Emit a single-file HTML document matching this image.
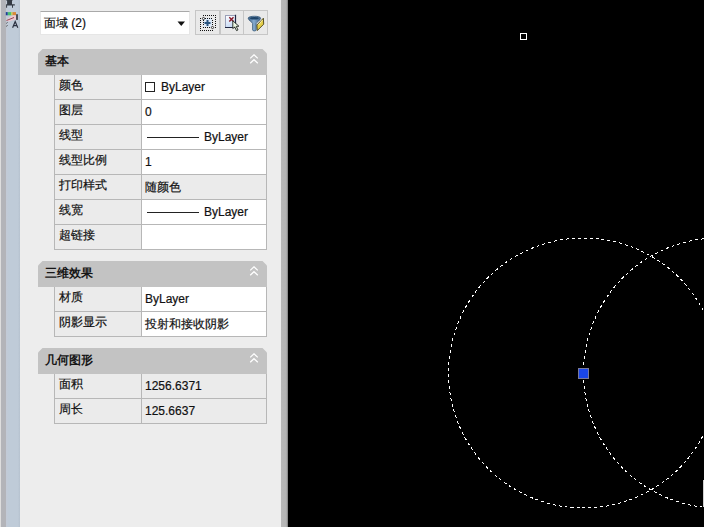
<!DOCTYPE html>
<html><head><meta charset="utf-8"><style>
*{margin:0;padding:0;box-sizing:border-box}
html,body{width:704px;height:527px;overflow:hidden;background:#000;font-family:"Liberation Sans",sans-serif;font-size:12px;color:#111;-webkit-text-stroke:0.2px #111}
.a{position:absolute}
.hd{position:absolute;left:38px;width:229px;height:26px;background:#c3c3c3;clip-path:polygon(4.5px 0,calc(100% - 4.5px) 0,100% 4.5px,100% 100%,0 100%,0 4.5px);font-weight:bold;line-height:25px;padding-left:7px;color:#161616;-webkit-text-stroke:0}
.hd .chev{position:absolute;left:211px;top:5px}
.grid{position:absolute;left:54px;width:213px;border:1px solid #b7b7b7;border-top:none;background:#ebebeb}
.row{position:relative;height:25px;border-bottom:1px solid #b7b7b7}
.row:last-child{border-bottom:none;height:24px}
.lb{position:absolute;left:0;top:0;width:86px;height:24px;padding-left:4px;line-height:21px}
.vl{position:absolute;left:86px;top:0;width:125px;height:24px;border-left:1px solid #b7b7b7;background:#fff;padding-left:3px;line-height:25px}
.vl.ro{background:#ebebeb}
</style></head><body>
<!-- left strips -->
<div class="a" style="left:0;top:0;width:1px;height:527px;background:#dedede"></div>
<div class="a" style="left:1px;top:0;width:5px;height:527px;background:#b3b4b9"></div>
<div class="a" style="left:6px;top:0;width:14px;height:527px;background:linear-gradient(to right,#c3cad6 0,#bfcbd8 20%,#bfcbd8 85%,#b6c2cf 100%)"></div>
<svg class="a" style="left:5px;top:0;z-index:2" width="15" height="32" viewBox="0 0 15 32">
 <path d="M1.1 0h6.6v0.6h-0.7v3.7h2.8v1.3h-1.8v2.1h-1v-2.1h-4.9v2.1h-1v-3.4h1v-3.7h-1z" fill="#353b44"/>
 <rect x="0.8" y="12.1" width="2" height="3.2" fill="#1f3f9a"/><rect x="2.8" y="12.1" width="3.4" height="3.2" fill="#48c070"/><rect x="6.2" y="12.1" width="1.4" height="3.2" fill="#c8d048"/><rect x="7.6" y="12.1" width="3.4" height="3.2" fill="#d8883a"/>
 <path d="M1.2 20.5C3 18 6 16 8.5 15.3L11 15.5L11 19.5L7 20.5L4 21.4z" fill="#ecc8cf"/>
 <path d="M1.5 20.5L9 17.5" stroke="#8a3a4a" stroke-width="0.9"/>
 <rect x="11" y="14.2" width="2" height="5.7" fill="#4a505a"/>
 <path d="M1.5 23.5l0.9-1.2M1.5 26.5l0.9-1.3" stroke="#333" stroke-width="0.9"/>
 <path d="M7.6 27.8l2.6-6.2 2.6 6.2M8.6 25.6h3.2" fill="none" stroke="#2a3040" stroke-width="1.2"/>
</svg>
<!-- panel -->
<div class="a" style="left:20px;top:0;width:261px;height:527px;background:#ededed"></div>
<div class="a" style="left:281px;top:0;width:7px;height:527px;background:linear-gradient(to right,#b9b9b9 0,#b5b5b5 75%,#7a7a7a 100%)"></div>

<!-- dropdown -->
<div class="a" style="left:40px;top:11px;width:150px;height:24px;background:#fff;border-top:1px solid #a9a9a9;border-left:1px solid #e6e6e6;border-right:1px solid #e6e6e6;border-bottom:1px solid #e6e6e6"></div>
<div class="a" style="left:44px;top:16px;line-height:14px">面域 (2)</div>
<svg class="a" style="left:177px;top:21px" width="9" height="6"><path d="M0.5 0.5H8L4.25 5z" fill="#111"/></svg>

<!-- buttons -->
<div class="a" style="left:195px;top:10px;width:25px;height:25px;background:#e9e9e9;border:1px solid #c6c6c6"></div>
<div class="a" style="left:220px;top:10px;width:24px;height:25px;background:#e9e9e9;border:1px solid #c6c6c6"></div>
<div class="a" style="left:243px;top:10px;width:25px;height:25px;background:#e9e9e9;border:1px solid #c6c6c6"></div>
<svg class="a" style="left:195px;top:10px" width="25" height="25" viewBox="0 0 25 25">
 <rect x="8" y="8" width="9" height="9" fill="#dce8f6"/>
 <g fill="#111">
  <path d="M8 5h1v1h-1zM10 5h1v1h-1zM12 5h1v1h-1zM14 5h1v1h-1zM16 5h1v1h-1zM18 5h1v1h-1zM20 5h1v1h-1z"/>
  <path d="M20 7h1v1h-1zM20 9h1v1h-1zM20 11h1v1h-1zM20 13h1v1h-1zM20 15h1v1h-1zM20 17h1v1h-1z"/>
  <path d="M5 8h1v1h-1zM5 10h1v1h-1zM5 12h1v1h-1zM5 14h1v1h-1zM5 16h1v1h-1zM5 18h1v1h-1zM5 20h1v1h-1z"/>
  <path d="M7 20h1v1h-1zM9 20h1v1h-1zM11 20h1v1h-1zM13 20h1v1h-1zM15 20h1v1h-1zM17 20h1v1h-1z"/>
  <path d="M10 8h1v1h-1zM12 8h1v1h-1zM14 8h1v1h-1zM16 8h1v1h-1z"/>
  <path d="M8 17h1v1h-1zM10 17h1v1h-1zM12 17h1v1h-1zM14 17h1v1h-1z"/>
  <path d="M8 10h1v1h-1zM8 12h1v1h-1zM8 14h1v1h-1z"/>
  <path d="M17 10h1v1h-1zM17 12h1v1h-1zM17 14h1v1h-1z"/>
 </g>
 <circle cx="8.5" cy="8.5" r="1.1" fill="#fff" stroke="#111" stroke-width="0.8"/>
 <circle cx="17.5" cy="17.5" r="1.1" fill="#fff" stroke="#111" stroke-width="0.8"/>
 <path d="M12.5 10v6M9.5 13h6" stroke="#2a5580" stroke-width="2"/>
</svg>
<svg class="a" style="left:220px;top:10px" width="24" height="25" viewBox="0 0 24 25">
 <defs><linearGradient id="g2" x1="0" y1="0" x2="0.3" y2="1"><stop offset="0" stop-color="#ffffff"/><stop offset="1" stop-color="#c8daf5"/></linearGradient></defs>
 <rect x="5.5" y="5.5" width="10" height="12" fill="url(#g2)" stroke="#9aa0b8" stroke-width="1"/>
 <path d="M5 17.5h10.5V4.8" fill="none" stroke="#1e2440" stroke-width="1.2"/>
 <path d="M9.3 7.3l4.2 4.2M13.5 7.3l-4.2 4.2" stroke="#8a1826" stroke-width="1.4"/>
 <path d="M12.8 10.8v7.8l1.9-1.6 1.8 3.6 1.5-0.7-1.8-3.5 2.7-0.2z" fill="#eef8e4" stroke="#1c241c" stroke-width="0.9"/>
</svg>
<svg class="a" style="left:243px;top:10px" width="25" height="25" viewBox="0 0 25 25">
 <defs><linearGradient id="g3" x1="0" y1="0" x2="1" y2="0"><stop offset="0" stop-color="#3d6288"/><stop offset="0.45" stop-color="#86acd0"/><stop offset="1" stop-color="#3d6288"/></linearGradient></defs>
 <path d="M5.2 8.2C5.2 5.6 17.6 5.6 17.6 8.2C17.6 10.2 13.6 12 13.2 13.5V19.9C13.2 21.3 9.6 21.3 9.6 19.9V13.5C9.2 12 5.2 10.2 5.2 8.2z" fill="url(#g3)" stroke="#3a5a78" stroke-width="0.8"/>
 <ellipse cx="11.4" cy="8.3" rx="4.4" ry="1.3" fill="#1f4468"/>
 <path d="M20.4 8.2L20.7 14.2L14.3 20.6L13.9 15z" fill="#e2cc48" stroke="#4a4418" stroke-width="0.9"/>
 <path d="M19.5 10L15.5 15" fill="none" stroke="#f8f0b0" stroke-width="0.9"/>
</svg>
<!-- section 1 -->
<div class="hd" style="top:49px">基本<svg class="chev" width="10" height="10" viewBox="0 0 10 10"><path d="M1.2 4.4L5 0.8L8.8 4.4M1.2 9.3L5 5.7L8.8 9.3" fill="none" stroke="#fff" stroke-width="1.25"/></svg></div>
<div class="grid" style="top:75px">
 <div class="row"><div class="lb">颜色</div><div class="vl"><span style="display:inline-block;width:10px;height:10px;border:1px solid #222;vertical-align:-1px;margin-right:6px;margin-left:0"></span>ByLayer</div></div>
 <div class="row"><div class="lb">图层</div><div class="vl">0</div></div>
 <div class="row"><div class="lb">线型</div><div class="vl"><span style="display:inline-block;width:52px;height:1px;background:#222;vertical-align:3px;margin-left:2px;margin-right:5px"></span>ByLayer</div></div>
 <div class="row"><div class="lb">线型比例</div><div class="vl">1</div></div>
 <div class="row"><div class="lb">打印样式</div><div class="vl ro">随颜色</div></div>
 <div class="row"><div class="lb">线宽</div><div class="vl"><span style="display:inline-block;width:52px;height:1px;background:#222;vertical-align:3px;margin-left:2px;margin-right:5px"></span>ByLayer</div></div>
 <div class="row"><div class="lb">超链接</div><div class="vl"></div></div>
</div>

<!-- section 2 -->
<div class="hd" style="top:261px">三维效果<svg class="chev" width="10" height="10" viewBox="0 0 10 10"><path d="M1.2 4.4L5 0.8L8.8 4.4M1.2 9.3L5 5.7L8.8 9.3" fill="none" stroke="#fff" stroke-width="1.25"/></svg></div>
<div class="grid" style="top:287px">
 <div class="row"><div class="lb">材质</div><div class="vl">ByLayer</div></div>
 <div class="row"><div class="lb">阴影显示</div><div class="vl">投射和接收阴影</div></div>
</div>

<!-- section 3 -->
<div class="hd" style="top:348px">几何图形<svg class="chev" width="10" height="10" viewBox="0 0 10 10"><path d="M1.2 4.4L5 0.8L8.8 4.4M1.2 9.3L5 5.7L8.8 9.3" fill="none" stroke="#fff" stroke-width="1.25"/></svg></div>
<div class="grid" style="top:374px">
 <div class="row"><div class="lb">面积</div><div class="vl ro">1256.6371</div></div>
 <div class="row"><div class="lb">周长</div><div class="vl ro">125.6637</div></div>
</div>

<!-- canvas -->
<svg class="a" style="left:288px;top:0" width="416" height="527">
 <rect x="232.5" y="33.5" width="6" height="6" fill="none" stroke="#fff" stroke-width="1"/>
 <circle cx="295.5" cy="373" r="135" fill="none" stroke="#fff" stroke-width="1" stroke-dasharray="3 3" shape-rendering="crispEdges"/>
 <circle cx="430.5" cy="373" r="135" fill="none" stroke="#fff" stroke-width="1" stroke-dasharray="3 3" shape-rendering="crispEdges"/>
 <rect x="290.5" y="368.5" width="10" height="10" fill="#1a46e8" stroke="#7a7a9a" stroke-width="1"/>
 <rect x="415" y="480" width="1" height="27" fill="#d0d0d0"/>
</svg>
</body></html>
